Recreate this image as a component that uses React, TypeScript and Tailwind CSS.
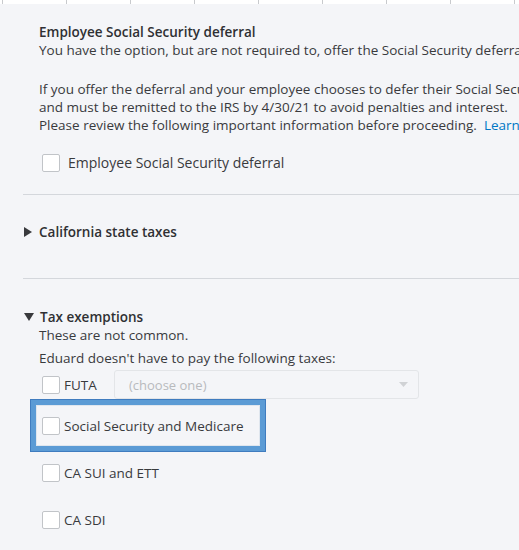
import React from "react";

function Box() {
  return <span className="inline-block w-[18px] h-[18px] bg-white border border-[#c1c4c8] rounded-[2px] shrink-0" />;
}

export default function App() {
  const cols = [2, 66, 130, 194, 258, 322, 386, 450, 514];
  return (
    <div className="w-[519px] h-[550px] overflow-hidden bg-[#f4f5f8] text-[#393a3d] text-[13.5px] leading-[18px]" style={{ fontFamily: "'Open Sans', Lato, sans-serif" }}>
      <div className="relative h-[4px] bg-white">
        {cols.map((x) => (
          <span key={x} className="absolute top-0 h-[4px] w-px bg-[#c8cacd]" style={{ left: x }} />
        ))}
      </div>
      <div className="pl-[39px] pt-[19px] whitespace-nowrap overflow-hidden">
        <div className="font-semibold text-[#2f3033]">Employee Social Security deferral</div>
        <div>You have the option, but are not required to, offer the Social Security deferral to your employees.</div>
        <div className="mt-[21px]">If you offer the deferral and your employee chooses to defer their Social Security taxes, these taxes</div>
        <div>and must be remitted to the IRS by 4/30/21 to avoid penalties and interest.</div>
        <div>
          Please review the following important information before proceeding.
          <span className="text-[#0077c5]">&nbsp;&nbsp;Learn more</span>
        </div>
        <label className="flex items-center gap-[8px] mt-[20px] ml-[3px]">
          <Box />
          <span className="text-[14px]">Employee Social Security deferral</span>
        </label>
      </div>
      <div className="ml-[23px] mt-[22px] border-t border-[#d4d7dc]" />
      <div className="flex items-start h-[83px] pt-[28px] pl-[24px] gap-[7px] font-semibold text-[#2f3033]">
        <svg width="8" height="10" viewBox="0 0 8 10" className="mt-[4px]"><path d="M0 0 L8 5 L0 10 Z" fill="#393a3d" /></svg>
        <span>California state taxes</span>
      </div>
      <div className="ml-[23px] border-t border-[#d4d7dc]" />
      <div className="pl-[24px] pt-[29px]">
        <div className="flex items-center gap-[6px] font-semibold text-[#2f3033]">
          <svg width="10" height="8" viewBox="0 0 10 8"><path d="M0 0 L10 0 L5 8 Z" fill="#393a3d" /></svg>
          <span>Tax exemptions</span>
        </div>
        <div className="pl-[15px]">These are not common.</div>
        <div className="pl-[15px] mt-[5px]">Eduard doesn't have to pay the following taxes:</div>
        <div className="flex items-center mt-[3px] pl-[18px]">
          <Box />
          <span className="ml-[4px] w-[50px]">FUTA</span>
          <div className="flex items-center justify-between w-[305px] h-[29px] border border-[#e3e5e8] rounded-[3px] pl-[14px] pr-[10px] text-[#b8babd] text-[13px]">
            <span>(choose one)</span>
            <svg width="9" height="5" viewBox="0 0 9 5"><path d="M0 0 L9 0 L4.5 5 Z" fill="#d0d2d5" /></svg>
          </div>
        </div>
        <div className="ml-[6px] mt-[0px] w-[236px] border border-[#3f7cbf] bg-[#5b9bd5] p-[5px]">
          <div className="flex items-center h-[41px] border border-[#dfe6ee] bg-[#f4f5f8] pl-[5px]">
            <Box />
            <span className="ml-[4px]">Social Security and Medicare</span>
          </div>
        </div>
        <div className="flex items-center pl-[18px] mt-[12px]">
          <Box />
          <span className="ml-[4px]">CA SUI and ETT</span>
        </div>
        <div className="flex items-center pl-[18px] mt-[29px]">
          <Box />
          <span className="ml-[4px]">CA SDI</span>
        </div>
      </div>
    </div>
  );
}
